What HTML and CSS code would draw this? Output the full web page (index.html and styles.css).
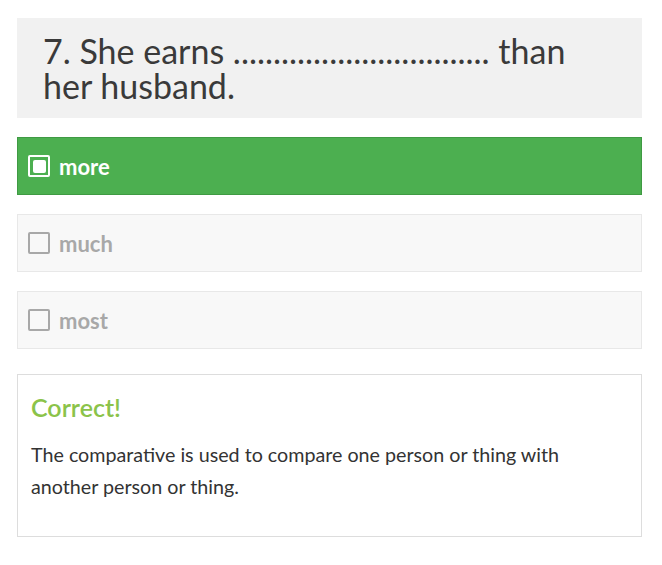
FILE: index.html
```html
<!DOCTYPE html>
<html>
<head>
<meta charset="utf-8">
<link rel="stylesheet" href="styles.css">
</head>
<body>
<div class="quiz">
  <div class="question">7. She earns ................................ than her husband.</div>
  <div class="options">
    <div class="option selected">
      <span class="box"><span class="fill"></span></span>
      <span class="label">more</span>
    </div>
    <div class="option">
      <span class="box"></span>
      <span class="label">much</span>
    </div>
    <div class="option">
      <span class="box"></span>
      <span class="label">most</span>
    </div>
  </div>
  <div class="feedback">
    <div class="feedback-title">Correct!</div>
    <p class="feedback-text">The comparative is used to compare one person or thing with another person or thing.</p>
  </div>
</div>
</body>
</html>
```

FILE: styles.css
```css
html, body {
  margin: 0;
  padding: 0;
  background: #ffffff;
}
body {
  font-family: Lato, "Liberation Sans", sans-serif;
  color: #333333;
}
.quiz {
  margin: 18px 20px 0 17px;
}
.question {
  background: #f1f1f1;
  padding: 15px 40px 15px 26px;
  font-size: 34px;
  line-height: 35px;
  color: #3a3a3a;
}
.options {
  margin-top: 19px;
  display: flex;
  flex-direction: column;
  gap: 19px;
}
.option {
  height: 56px;
  display: flex;
  align-items: center;
  padding-left: 10px;
  background: #f8f8f8;
  border: 1px solid #e8e8e8;
  color: #a8a8a8;
  font-weight: 700;
  font-size: 22px;
}
.option.selected {
  background: #4caf50;
  border-color: #3f9a43;
  color: #ffffff;
}
.box {
  width: 18px;
  height: 18px;
  border: 2px solid #a8a8a8;
  border-radius: 2px;
  display: flex;
  align-items: center;
  justify-content: center;
  margin-right: 9px;
  flex: none;
}
.option.selected .box {
  border-color: #ffffff;
}
.fill {
  width: 13px;
  height: 13px;
  background: #ffffff;
  border-radius: 2px;
}
.feedback {
  margin-top: 25px;
  border: 1px solid #dddddd;
  padding: 17px 30px 33px 13px;
}
.feedback-title {
  font-size: 25px;
  font-weight: 600;
  color: #8bc34a;
  line-height: 30px;
}
.feedback-text {
  margin: 17px 0 0;
  font-size: 19.7px;
  line-height: 32px;
  color: #333333;
}
```
